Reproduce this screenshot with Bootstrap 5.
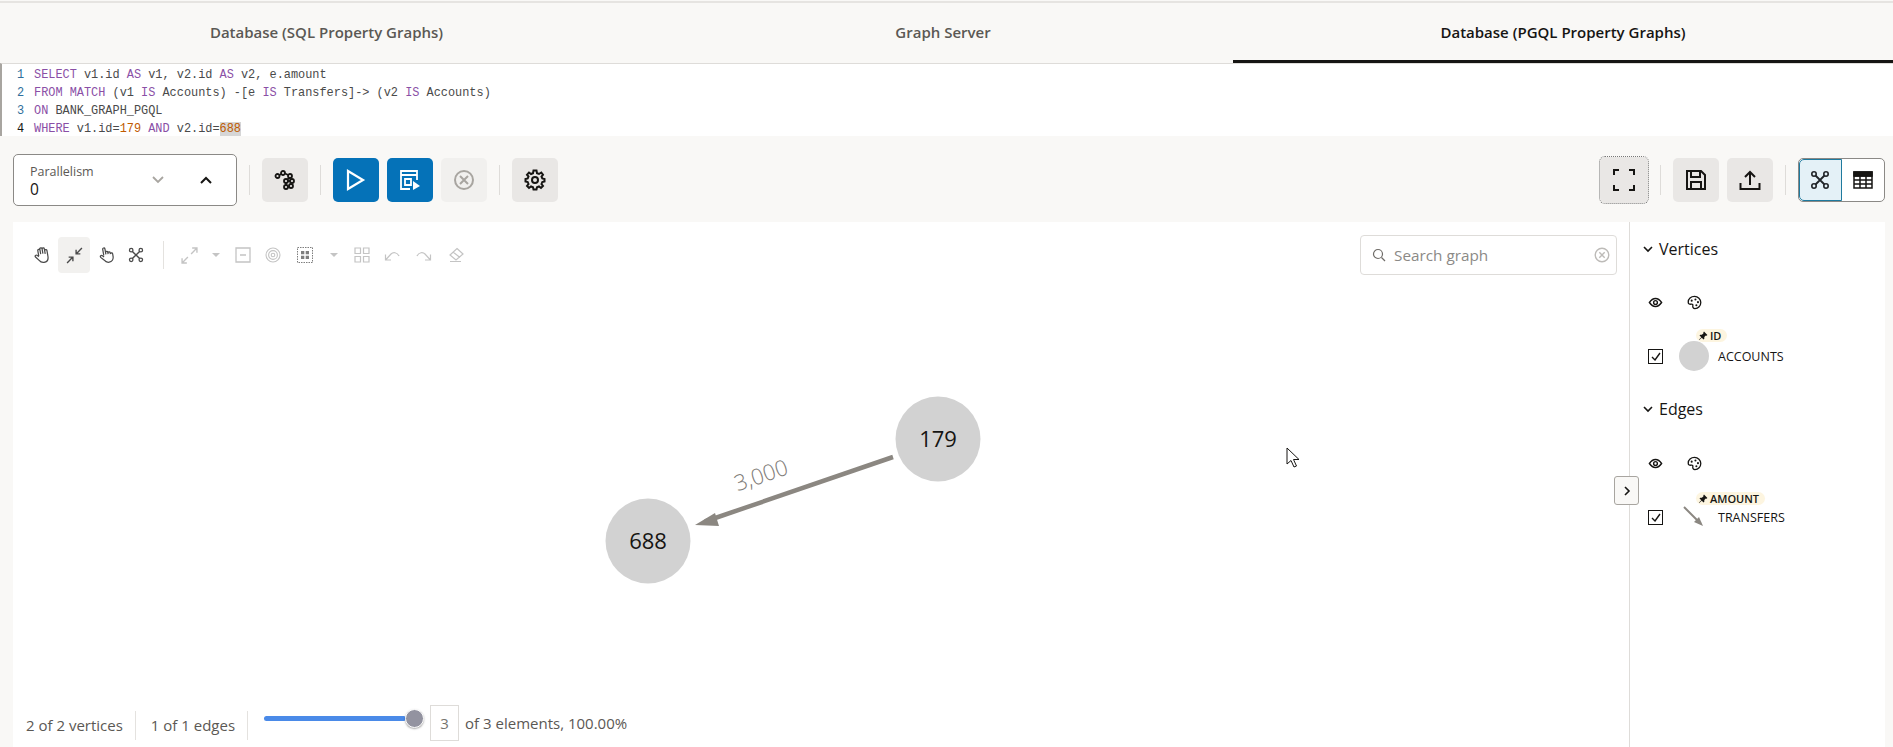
<!DOCTYPE html>
<html lang="en">
<head>
    <meta charset="UTF-8">
    <meta name="viewport" content="width=device-width, initial-scale=1.0">
    <title>Graph Visualization</title>
    <link rel="stylesheet" href="https://cdn.jsdelivr.net/npm/bootstrap@5.3.3/dist/css/bootstrap.min.css">
    <style>
        html,body{ height:100%; overflow:hidden; }
        body{ background:#f9f8f6; font-family:"Open Sans","Noto Sans",sans-serif; color:#161513; }
        .tabbar{ height:63px; border-top:2px solid #e6e4e1; margin-top:1px; margin-bottom:-1px; }
        .tab-item{ text-align:center; font-size:15px; font-weight:600; color:#5b5854; line-height:59px; height:60px; flex:none; }
        .tab-a{ width:653px; }
        .tab-b{ width:580px; }
        .tab-c{ width:660px; }
        .tab-item.on{ color:#161513; border-bottom:3px solid #161513; }
        .editor{ height:73px; padding-top:2px; background:#fff; border-top:1px solid #dedcd9; border-left:2px solid #a8a5a0;
            font-family:"Liberation Mono",monospace; font-size:11.9px; line-height:18px; color:#4a4a4a; overflow:hidden; }
        .code-line{ display:flex; height:18px; white-space:pre; }
        .ln{ width:32px; padding-left:15px; color:#2f6f9c; flex:none; }
        .ln.cur{ color:#161513; }
        .kw{ color:#8a4fa6; }
        .num{ color:#c05a00; }
        .hl{ background:#d6d6d6; }
        .toolbar{ height:86px; padding:18px 8px 0 13px; }
        .par-box{ width:224px; height:52px; background:#fff; border:1px solid #8b8986; border-radius:5px; padding:9px 0 0 16px; }
        .par-label{ font-size:12.5px; color:#5b5854; line-height:16px; }
        .par-val{ font-size:15.5px; line-height:18px; }
        .chev-down{ margin:11px 34px 0 0; }
        .chev-up{ margin:11px 23px 0 0; }
        .tool{ width:46px; height:44px; border:0; padding:0; border-radius:5px; background:#e9e7e5; margin-top:4px; display:flex; align-items:center; justify-content:center; flex:none; }
        .tool.blue{ background:#0572b8; }
        .tool.off{ background:#f1f0ee; }
        .tool.dotted{ width:48px; height:46px; margin-top:3px; outline:1px dotted #777; }
        .vsep{ width:1px; height:30px; background:#dedcd9; margin:11px 12px 0; flex:none; }
        .toggle{ width:87px; height:44px; margin-top:4px; border:1px solid #8b8986; border-radius:5px; background:#fff; overflow:hidden; }
        .toggle-cell{ flex:1 1 0; display:flex; align-items:center; justify-content:center; }
        .toggle-cell.on{ background:#e4f1f7; outline:1px solid #1f7a9e; outline-offset:-1px; border-radius:5px 0 0 5px; }
        .workspace{ height:525px; margin:0 8px 0 13px; background:#fff; }
        .graph-area{ width:1617px; position:relative; border-right:1px solid #dedcd9; flex:none; height:100%; }
        .graph-tools{ display:grid; grid-template-columns:32px 32.5px 31px 29px 25.5px 26px 27px 28px 32.5px 31px 27px 28px 32.5px 32px 32px; justify-items:center; align-items:center; height:36px; margin:15px 0 0 13px; width:460px; }
        .gt{ width:32px; height:36px; display:flex; align-items:center; justify-content:center; border-radius:4px; color:#c4c4c4; }
        .gt.live{ color:#4a4a4a; }
        .gt.active{ background:#f2f1ef; }
        .gt.dark{ color:#7e7e7e; }
        .gt-caret{ width:0; height:0; border-left:4px solid transparent; border-right:4px solid transparent; border-top:4px solid #c4c4c4; }
        .gt-sep{ width:1px; height:28px; background:#e4e2df; }
        .search-box{ position:absolute; left:1347px; top:13px; width:257px; height:40px; border:1px solid #dedcd9; border-radius:4px; padding:0 6px 0 11px; color:#8b8986; font-size:15.3px; }
        .canvas{ position:absolute; left:0; top:0; width:1616px; height:525px; pointer-events:none; }
        .status{ position:absolute; left:0; bottom:6px; width:900px; height:36px; font-size:15px; color:#5b5854; padding-left:13px; }
        .stat{ padding-right:12px; margin-right:15px; border-right:1px solid #e4e2df; height:29px; line-height:29px; margin-top:5px; }
        .track{ width:142px; height:5px; background:#4a8ae8; border-radius:3px; margin-top:-10px; position:relative; margin-left:1px; }
        .thumb{ position:absolute; right:-18px; top:-7px; width:19px; height:19px; border-radius:50%; background:#9393a0; box-shadow:0 1px 2px rgba(0,0,0,.35); border:1px solid #fff; }
        .count-box{ width:29px; height:36px; border:1px solid #dedcd9; text-align:center; line-height:34px; margin:0 6px 0 24px; color:#77746f; }
        .side{ flex:1 1 0; padding:15px 0 0 18px; font-size:12.5px; position:relative; }
        .side-head{ font-size:16px; height:24px; line-height:24px; margin-left:-5px; }
        .side-chev{ margin-right:6px; }
        .side-icons{ gap:24px; margin-top:34px; }
        .side-icons.lower{ margin-top:35px; }
        .legend-row{ position:relative; height:30px; margin-top:31px; }
        .group-gap{ margin-top:26px; }
        .check{ width:15px; height:15px; border:1.5px solid #161513; flex:none; display:flex; align-items:center; justify-content:center; }
        .swatch{ width:30px; height:30px; border-radius:50%; background:#d2d2d2; flex:none; margin-left:16px; }
        .arrow-swatch{ width:30px; height:30px; margin-left:16px; flex:none; }
        .legend-name{ margin-left:9px; padding-top:2px; }
        .pill{ position:absolute; left:48px; top:-12px; height:13px; background:#fdf5e0; border-radius:7px; font-size:11px; font-weight:600; line-height:13px; padding:0 6px 0 2px; display:flex; align-items:center; gap:2px; }
        .pill.low{ top:-10px; }
        .collapse-btn{ position:absolute; left:-16px; top:254px; width:25px; height:29px; background:#f9f8f6; border:1px solid #a8a5a0; border-radius:3px; display:flex; align-items:center; justify-content:center; }
    </style>
</head>
<body>
    <svg width="0" height="0" class="position-absolute">
        <symbol id="i-eye" viewBox="0 0 16 16"><path d="M1.500 8C3.500 5 5.500 3.800 8 3.800S12.500 5 14.500 8C12.500 11 10.500 12.200 8 12.200S3.500 11 1.500 8Z" fill="none" stroke="currentColor" stroke-width="1.500"/><circle cx="8" cy="8" r="2" fill="none" stroke="currentColor" stroke-width="1.500"/></symbol>
        <symbol id="i-palette" viewBox="0 0 16 16"><path d="M8 1.500C4.200 1.500 1.300 4.200 1.300 7.600 1.300 9.800 3 10 4.300 9.800 6 9.500 6.500 10.300 6.200 11.500 5.900 13 6.600 14.500 8.500 14.500 12 14.500 14.700 11.500 14.700 8 14.700 4.300 11.700 1.500 8 1.500Z" fill="none" stroke="currentColor" stroke-width="1.400"/><circle cx="5" cy="6" r="1.100" fill="currentColor"/><circle cx="9" cy="4.700" r="1.100" fill="currentColor"/><circle cx="11.700" cy="7.600" r="1.100" fill="currentColor"/><circle cx="10" cy="11" r="1.100" fill="currentColor"/></symbol>
        <symbol id="i-net" viewBox="0 0 20 20"><path d="M5.500 5.500 14.500 14.500M14.500 5.500 5.500 14.500" stroke="currentColor" stroke-width="1.800" fill="none"/><circle cx="4" cy="4" r="2.200" fill="none" stroke="currentColor" stroke-width="1.600"/><circle cx="16" cy="4" r="2.200" fill="none" stroke="currentColor" stroke-width="1.600"/><circle cx="4" cy="16" r="2.200" fill="none" stroke="currentColor" stroke-width="1.600"/><circle cx="16" cy="16" r="2.200" fill="none" stroke="currentColor" stroke-width="1.600"/></symbol>
        <symbol id="i-hand" viewBox="0 0 16 16"><path transform="rotate(-10 8 8)" d="M5 8.500V3.500a1 1 0 0 1 2 0V7M7 7V2.500a1 1 0 0 1 2 0V7M9 7V3a1 1 0 0 1 2 0V7.500M11 7.500V4.800a1 1 0 0 1 2 0V10c0 3-1.800 4.800-4.300 4.800-2 0-3.200-1-4.200-2.800L2 8.800c-.7-1.200.9-2.200 1.800-1.200L5 9" fill="none" stroke="currentColor" stroke-width="1.100"/></symbol>
        <symbol id="i-point" viewBox="0 0 16 16"><path transform="rotate(-10 8 8)" d="M6 8V2.500a1 1 0 0 1 2 0V7.500M8 7V6a1 1 0 0 1 2 0V7.500M10 7.500V6.800a1 1 0 0 1 2 0V8M12 8a1 1 0 0 1 2 0V10c0 2.800-1.800 4.800-4.300 4.800-2 0-3.200-1-4.200-2.800L3 9.300c-.7-1.200.9-2.200 1.800-1.200L6 9.500" fill="none" stroke="currentColor" stroke-width="1.100"/></symbol>
        <symbol id="i-pin" viewBox="0 0 10 10"><path d="M6 .6 9.400 4 8.600 4.700 7.800 4.500 6.300 6.100 6.300 7.700 5.500 8.500 3.800 6.700 1.200 9.100.9 8.800 3.300 6.200 1.500 4.500 2.300 3.700 3.900 3.700 5.500 2.200 5.300 1.400Z" fill="#161513"/></symbol>
    </svg>

    <div class="tabbar d-flex">
        <div class="tab-item tab-a">Database (SQL Property Graphs)</div>
        <div class="tab-item tab-b">Graph Server</div>
        <div class="tab-item tab-c on">Database (PGQL Property Graphs)</div>
    </div>

    <div class="editor">
        <div class="code-line"><span class="ln">1</span><span><span class="kw">SELECT</span> v1.id <span class="kw">AS</span> v1, v2.id <span class="kw">AS</span> v2, e.amount</span></div>
        <div class="code-line"><span class="ln">2</span><span><span class="kw">FROM</span> <span class="kw">MATCH</span> (v1 <span class="kw">IS</span> Accounts) -[e <span class="kw">IS</span> Transfers]-&gt; (v2 <span class="kw">IS</span> Accounts)</span></div>
        <div class="code-line"><span class="ln">3</span><span><span class="kw">ON</span> BANK_GRAPH_PGQL</span></div>
        <div class="code-line"><span class="ln cur">4</span><span><span class="kw">WHERE</span> v1.id=<span class="num">179</span> <span class="kw">AND</span> v2.id=<span class="num hl">688</span></span></div>
    </div>

    <div class="toolbar d-flex">
        <div class="par-box d-flex">
            <div class="flex-grow-1">
                <div class="par-label">Parallelism</div>
                <div class="par-val">0</div>
            </div>
            <svg width="14" height="10" viewBox="0 0 14 10" class="chev-down"><path d="M2 2 7 7 12 2" fill="none" stroke="#a8a5a0" stroke-width="1.800"/></svg>
            <svg width="14" height="10" viewBox="0 0 14 10" class="chev-up"><path d="M2 8 7 3 12 8" fill="none" stroke="#161513" stroke-width="2"/></svg>
        </div>
        <div class="vsep"></div>
        <button class="tool">
            <svg width="22" height="20" viewBox="0 0 22 20" fill="none" stroke="#161513" stroke-width="1.800"><circle cx="3.500" cy="6" r="2"/><circle cx="9" cy="3" r="2"/><circle cx="16" cy="6" r="2"/><circle cx="12" cy="11" r="2"/><circle cx="18" cy="11" r="2"/><circle cx="12" cy="17" r="2"/><circle cx="17" cy="16" r="2"/><path d="M5.500 5 7 4M11 3.500 14.200 5M16 8 13 9.500M12 13V15M14 11H16M14 17 15.500 16.500"/></svg>
        </button>
        <div class="vsep"></div>
        <button class="tool blue me-2">
            <svg width="20" height="24" viewBox="0 0 20 24"><path d="M2 3 17 12 2 21Z" fill="none" stroke="#fff" stroke-width="2.200"/></svg>
        </button>
        <button class="tool blue me-2">
            <svg width="24" height="24" viewBox="0 0 24 24" fill="none" stroke="#fff" stroke-width="1.800"><path d="M19 12V3H3V21H12M3 7H19"/><path d="M7 11H13V17H7Z"/><path d="M15 13 22 18 15 22Z" fill="#fff" stroke="none"/></svg>
        </button>
        <button class="tool off">
            <svg width="22" height="22" viewBox="0 0 22 22" fill="none" stroke="#a8a5a0" stroke-width="2"><circle cx="11" cy="11" r="9"/><path d="M7 7 15 15M15 7 7 15"/></svg>
        </button>
        <div class="vsep"></div>
        <button class="tool">
            <svg width="22" height="22" viewBox="0 0 22 22" fill="none" stroke="#161513" stroke-width="2"><circle cx="11" cy="11" r="3"/><path d="M9.500 1.500H12.500L13 4.200 15 5 17.300 3.500 19 5.700 17.500 7.700 18.300 9.500 20.500 10V12.500L18.300 13 17.500 15 19 17 17 19 15 17.500 13 18.300 12.500 20.500H9.500L9 18.300 7 17.500 5 19 3 17 4.500 15 3.700 13 1.500 12.500V10L3.700 9.500 4.500 7.500 3 5.700 5 3.500 7 5 9 4.200Z"/></svg>
        </button>

        <div class="flex-grow-1"></div>

        <button class="tool dotted">
            <svg width="22" height="22" viewBox="0 0 22 22" fill="none" stroke="#161513" stroke-width="2"><path d="M1 6V1H6M16 1H21V6M21 16V21H16M6 21H1V16"/></svg>
        </button>
        <div class="vsep"></div>
        <button class="tool me-2">
            <svg width="22" height="22" viewBox="0 0 22 22" fill="none" stroke="#161513" stroke-width="2"><path d="M2 2H16L20 6V20H2Z"/><path d="M6 2V8H15V2M6 20V13H16V20"/></svg>
        </button>
        <button class="tool">
            <svg width="22" height="22" viewBox="0 0 22 22" fill="none" stroke="#161513" stroke-width="2"><path d="M1.500 14V20H20.500V14M11 16V3M6 8 11 3 16 8"/></svg>
        </button>
        <div class="vsep"></div>
        <div class="toggle d-flex">
            <div class="toggle-cell on">
                <svg width="20" height="20" class="text-dark"><use href="#i-net"/></svg>
            </div>
            <div class="toggle-cell">
                <svg width="20" height="18" viewBox="0 0 20 18" fill="none" stroke="#161513" stroke-width="1.500"><path d="M1 1H19V17H1ZM1 5H19M1 9H19M1 13H19M7 5V17M13 5V17"/><path d="M1 1H19V5H1Z" fill="#161513"/></svg>
            </div>
        </div>
    </div>

    <div class="workspace d-flex">
        <div class="graph-area">
            <div class="graph-tools">
                <div class="gt live"><svg width="18" height="18"><use href="#i-hand"/></svg></div>
                <div class="gt live active">
                    <svg width="17" height="17" viewBox="0 0 16 16" fill="none" stroke="currentColor" stroke-width="1.300"><path d="M15 1 9.500 6.500M9.500 2.500V6.500H13.500M1 15 6.500 9.500M6.500 13.500V9.500H2.500"/></svg>
                </div>
                <div class="gt live"><svg width="18" height="18"><use href="#i-point"/></svg></div>
                <div class="gt live"><svg width="16" height="16"><use href="#i-net"/></svg></div>
                <div class="gt-sep"></div>
                <div class="gt">
                    <svg width="17" height="17" viewBox="0 0 16 16" fill="none" stroke="currentColor" stroke-width="1.300"><path d="M9.500 6.500 15 1M10.500 1H15V5.500M6.500 9.500 1 15M1 10.500V15H5.500"/></svg>
                </div>
                <div class="gt-caret"></div>
                <div class="gt">
                    <svg width="16" height="16" viewBox="0 0 16 16" fill="none" stroke="currentColor" stroke-width="1.300"><path d="M1 1H15V15H1ZM5 8H11"/></svg>
                </div>
                <div class="gt">
                    <svg width="16" height="16" viewBox="0 0 16 16" fill="none" stroke="currentColor" stroke-width="1.100"><circle cx="8" cy="8" r="7"/><circle cx="8" cy="8" r="4.400"/><circle cx="8" cy="8" r="1.800"/></svg>
                </div>
                <div class="gt dark">
                    <svg width="16" height="16" viewBox="0 0 16 16" fill="none" stroke="currentColor" stroke-width="1"><path d="M.5.5H15.500V15.500H.5Z" stroke-dasharray="1.500 1"/><path d="M4 4H7.300V7.300H4ZM8.700 4H12V7.300H8.700ZM4 8.700H7.300V12H4ZM8.700 8.700H12V12H8.700Z" fill="currentColor" stroke="none"/></svg>
                </div>
                <div class="gt-caret"></div>
                <div class="gt">
                    <svg width="16" height="16" viewBox="0 0 16 16" fill="none" stroke="currentColor" stroke-width="1.200"><path d="M1 1H6.500V6.500H1ZM9.500 1H15V6.500H9.500ZM1 9.500H6.500V15H1ZM9.500 9.500H15V15H9.500Z"/></svg>
                </div>
                <div class="gt">
                    <svg width="16" height="16" viewBox="0 0 16 16" fill="none" stroke="currentColor" stroke-width="1.200"><path d="M1.500 7.500V13H7M1.500 13 7 7C9 5 13 5 15 9"/></svg>
                </div>
                <div class="gt">
                    <svg width="16" height="16" viewBox="0 0 16 16" fill="none" stroke="currentColor" stroke-width="1.200"><path d="M14.500 7.500V13H9M14.500 13 9 7C7 5 3 5 1 9"/></svg>
                </div>
                <div class="gt">
                    <svg width="16" height="16" viewBox="0 0 16 16" fill="none" stroke="currentColor" stroke-width="1.200"><path d="M9 1.500 15 7 8 13 2 8ZM5 5 12 10.500M2 14.500H13"/></svg>
                </div>
            </div>

            <div class="search-box d-flex align-items-center">
                <svg width="14" height="14" viewBox="0 0 14 14" fill="none" stroke="#6f6c68" stroke-width="1.200" class="me-2"><circle cx="6" cy="6" r="4.500"/><path d="M9.500 9.500 13 13"/></svg>
                <span class="flex-grow-1">Search graph</span>
                <svg width="16" height="16" viewBox="0 0 16 16" fill="none" stroke="#bdbbb8" stroke-width="1.400"><circle cx="8" cy="8" r="6.800"/><path d="M5.300 5.300 10.700 10.700M10.700 5.300 5.300 10.700"/></svg>
            </div>

            <!-- graph canvas, coords relative to the white area -->
            <svg class="canvas" viewBox="0 0 1616 525">
                <line x1="880" y1="235" x2="692" y2="299.500" stroke="#8b8781" stroke-width="4.500"/>
                <path d="M682 303 702 291 706 304Z" fill="#8b8781"/>
                <circle cx="925" cy="217" r="42.500" fill="#d2d2d2"/>
                <circle cx="635" cy="319" r="42.500" fill="#d2d2d2"/>
                <text x="925" y="225" text-anchor="middle" font-size="22" fill="#161513" font-family="Open Sans">179</text>
                <text x="635" y="327" text-anchor="middle" font-size="22" fill="#161513" font-family="Open Sans">688</text>
                <text x="748" y="261" text-anchor="middle" font-size="22" fill="#7f7c78" font-family="Open Sans" font-weight="300" transform="rotate(-19 748 253)">3,000</text>
                <path d="M1274 226V242L1278 238.500 1281 245 1283.500 244 1280.500 237.500H1286Z" fill="#fff" stroke="#161513" stroke-width="1"/>
            </svg>

            <div class="status d-flex align-items-center">
                <div class="stat">2 of 2 vertices</div>
                <div class="stat">1 of 1 edges</div>
                <div class="track"><div class="thumb"></div></div>
                <div class="count-box">3</div>
                <div>of 3 elements, 100.00%</div>
            </div>
        </div>

        <div class="side">
            <div class="side-head d-flex align-items-center">
                <svg width="10" height="7" viewBox="0 0 10 7" class="side-chev"><path d="M1 1 5 5 9 1" fill="none" stroke="#161513" stroke-width="1.600"/></svg>Vertices
            </div>
            <div class="side-icons d-flex">
                <svg width="15" height="15"><use href="#i-eye"/></svg>
                <svg width="15" height="15"><use href="#i-palette"/></svg>
            </div>
            <div class="legend-row d-flex align-items-center">
                <div class="check"><svg width="10" height="9" viewBox="0 0 10 9"><path d="M1 5 4 8 9 1" fill="none" stroke="#161513" stroke-width="1.400"/></svg></div>
                <div class="swatch"></div>
                <div class="legend-name">ACCOUNTS</div>
                <div class="pill"><svg width="10" height="10"><use href="#i-pin"/></svg>ID</div>
            </div>
            <div class="side-head group-gap d-flex align-items-center">
                <svg width="10" height="7" viewBox="0 0 10 7" class="side-chev"><path d="M1 1 5 5 9 1" fill="none" stroke="#161513" stroke-width="1.600"/></svg>Edges
            </div>
            <div class="side-icons lower d-flex">
                <svg width="15" height="15"><use href="#i-eye"/></svg>
                <svg width="15" height="15"><use href="#i-palette"/></svg>
            </div>
            <div class="legend-row d-flex align-items-center">
                <div class="check"><svg width="10" height="9" viewBox="0 0 10 9"><path d="M1 5 4 8 9 1" fill="none" stroke="#161513" stroke-width="1.400"/></svg></div>
                <div class="arrow-swatch"><svg width="30" height="30" viewBox="0 0 30 30"><path d="M5 5 19 19" stroke="#8b8781" stroke-width="2"/><path d="M24 24 15 20 20 15Z" fill="#8b8781"/></svg></div>
                <div class="legend-name">TRANSFERS</div>
                <div class="pill low"><svg width="10" height="10"><use href="#i-pin"/></svg>AMOUNT</div>
            </div>
            <button class="collapse-btn p-0">
                <svg width="8" height="10" viewBox="0 0 8 10"><path d="M2 1 6 5 2 9" fill="none" stroke="#161513" stroke-width="1.600"/></svg>
            </button>
        </div>
    </div>

    <script src="https://cdn.jsdelivr.net/npm/bootstrap@5.3.3/dist/js/bootstrap.bundle.min.js"></script>
</body>
</html>
